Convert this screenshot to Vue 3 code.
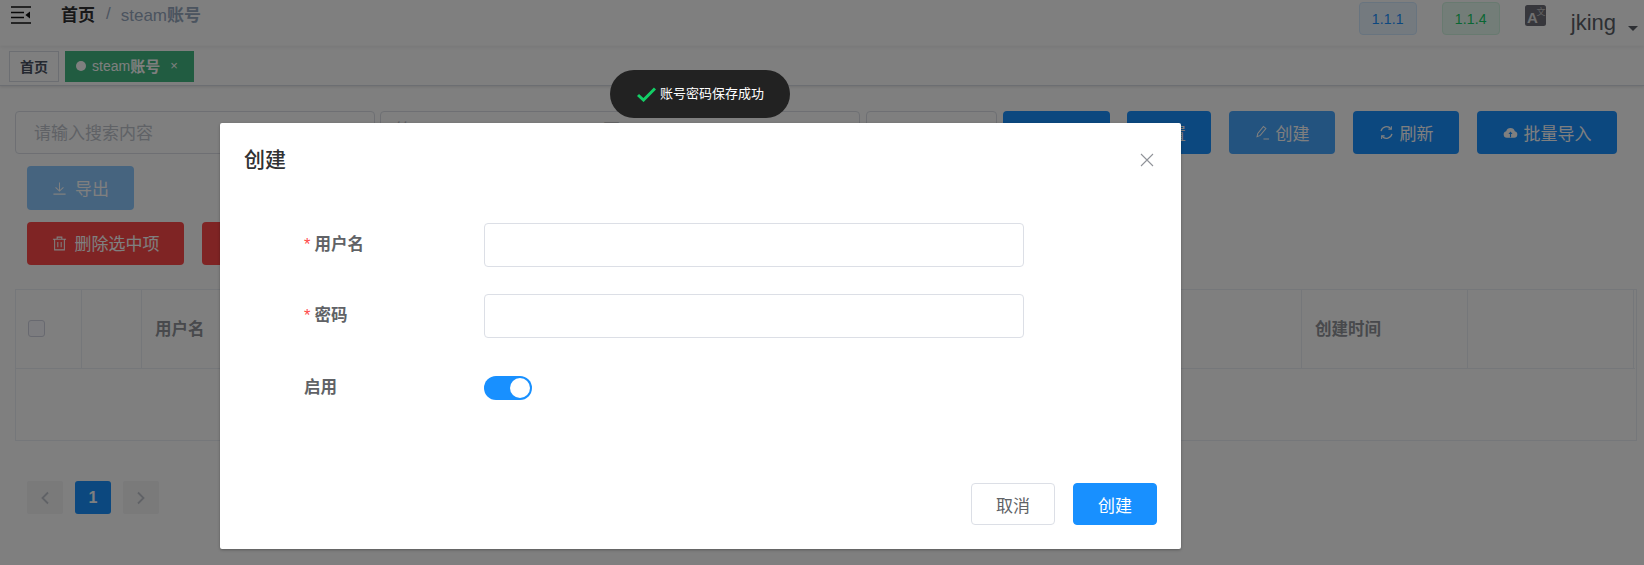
<script setup>
const filterSelects = [
  { cls: 'sel-a', text: '筛', dark: '不' },
  { cls: 'sel-b', text: '', dark: '' }
]
const columns = [
  { cls: 'col-check' },
  { cls: 'col-index' },
  { cls: 'col-name', label: '用户名' },
  { cls: 'col-time', label: '创建时间' },
  { cls: 'col-op' }
]
</script>

<template>
  <div class="page">
    <header class="navbar">
      <svg class="hamburger" width="20" height="18" viewBox="0 0 20 18">
        <path d="M0 1h20M0 6.5h13M0 11.5h13M0 17h20" stroke="#111" stroke-width="1.6" fill="none" />
        <path d="M19 5.5v7l-4.6-3.5z" fill="#111" />
      </svg>
      <nav class="crumbs">
        <span class="crumb-home">首页</span>
        <span class="crumb-sep">/</span>
        <span class="crumb-cur">steam<b>账号</b></span>
      </nav>
      <div class="nav-right">
        <span class="ver ver-blue">1.1.1</span>
        <span class="ver ver-green">1.1.4</span>
        <svg class="lang" width="21" height="21" viewBox="0 0 21 21">
          <rect width="21" height="21" rx="2.5" fill="#6e6e78" />
          <text x="2" y="17.5" font-family="Liberation Sans, sans-serif" font-size="15" font-weight="700" fill="#e0e0e0">A</text>
          <text x="11.5" y="9.5" font-family="Noto Sans CJK SC, sans-serif" font-size="9" fill="#c4c4c4">文</text>
        </svg>
        <span class="user">jking</span>
        <span class="caret"></span>
      </div>
    </header>

    <div class="tags">
      <span class="tag tag-home">首页</span>
      <span class="tag tag-active"><i class="dot"></i>steam<b>账号</b><span class="tag-x">×</span></span>
    </div>

    <main class="content">
      <div class="row">
        <div class="field search">请输入搜索内容</div>
        <div v-for="s in filterSelects" :key="s.cls" class="field" :class="s.cls">
          <span class="sel-text">{{ s.text }}</span>
          <span class="sel-dark">{{ s.dark }}</span>
        </div>
        <button class="btn btn-search">搜索</button>
        <button class="btn btn-reset">重置</button>
        <button class="btn btn-create">
          <svg class="ico" viewBox="0 0 16 16" fill="none" stroke="currentColor" stroke-width="1.1">
            <path d="M2.2 12.4 3 9 9 1.6l2.6 2.1-6 7.4z M9 15h6" />
          </svg>
          创建
        </button>
        <button class="btn btn-refresh">
          <svg class="ico" viewBox="0 0 16 16" fill="none" stroke="currentColor" stroke-width="1.4">
            <path d="M2.2 6.5A6 6 0 0 1 12.6 3.8M13.8 9.5A6 6 0 0 1 3.4 12.2" />
            <path d="M13.2 1.2v3.2H10M2.8 14.8v-3.2H6" stroke-width="1.1" />
          </svg>
          刷新
        </button>
        <button class="btn btn-import">
          <svg class="ico" viewBox="0 0 16 16">
            <path fill="currentColor" d="M4 13.5A3.5 3.5 0 0 1 3.4 6.6 4.8 4.8 0 0 1 12.6 6.6 3.5 3.5 0 0 1 12 13.5z" />
            <path fill="#1890ff" d="M8 7 5.8 9.6h1.6V13h1.2V9.6h1.6z" />
          </svg>
          批量导入
        </button>
      </div>

      <div class="row row-2">
        <button class="btn btn-export">
          <svg class="ico" viewBox="0 0 16 16" fill="none" stroke="currentColor" stroke-width="1.1">
            <path d="M8 1.5v9M3.8 6.8 8 10.8l4.2-4M1.5 14h13" />
          </svg>
          <span class="btn-text">导出</span>
        </button>
      </div>

      <div class="row row-3">
        <button class="btn btn-danger">
          <svg class="ico" viewBox="0 0 16 16" fill="none" stroke="currentColor" stroke-width="1.1">
            <path d="M1 3.5h14M5.5 3.5V1.2h5v2.3M2.8 3.5v11.3h10.4V3.5M6.2 6.5v5.5M9.8 6.5v5.5" />
          </svg>
          <span class="btn-text">删除选中项</span>
        </button>
        <button class="btn btn-danger">清空</button>
      </div>

      <div class="table">
        <div class="thead">
          <div v-for="c in columns" :key="c.cls" class="th" :class="c.cls">
            <span v-if="c.cls === 'col-check'" class="check"></span>
            <template v-else>{{ c.label }}</template>
          </div>
        </div>
        <div class="tbody"></div>
      </div>

      <div class="pager">
        <span class="pg">
          <svg width="10" height="14" viewBox="0 0 10 14" fill="none" stroke="currentColor" stroke-width="1.8"><path d="M8 1.5 2.5 7 8 12.5" /></svg>
        </span>
        <span class="pg pg-on">1</span>
        <span class="pg">
          <svg width="10" height="14" viewBox="0 0 10 14" fill="none" stroke="currentColor" stroke-width="1.8"><path d="M2 1.5 7.5 7 2 12.5" /></svg>
        </span>
      </div>
    </main>

    <div class="overlay"></div>

    <section class="dialog">
      <div class="dialog-head">
        <span class="dialog-title">创建</span>
        <svg class="close" width="14" height="14" viewBox="0 0 14 14" stroke="#909399" stroke-width="1.1" fill="none">
          <path d="M1 1l12 12M13 1 1 13" />
        </svg>
      </div>
      <form class="form" @submit.prevent>
        <div class="form-item">
          <label class="label"><em>*</em>用户名</label>
          <div class="input"></div>
        </div>
        <div class="form-item">
          <label class="label"><em>*</em>密码</label>
          <div class="input"></div>
        </div>
        <div class="form-item form-switch">
          <label class="label">启用</label>
          <span class="switch"><i></i></span>
        </div>
      </form>
      <div class="dialog-foot">
        <button class="dbtn">取消</button>
        <button class="dbtn dbtn-primary">创建</button>
      </div>
    </section>

    <div class="toast">
      <svg width="19" height="15" viewBox="0 0 19 15" fill="none" stroke="#13ce66" stroke-width="3">
        <path d="M1 8 6.5 13 18 1.5" />
      </svg>
      <span class="toast-text">账号密码保存成功</span>
    </div>
  </div>
</template>

<style scoped>
.page {
  position: relative;
  width: 1644px;
  height: 565px;
  overflow: hidden;
  background: #fff;
  font-family: "Liberation Sans", "Noto Sans CJK SC", sans-serif;
  font-size: 17px;
  color: #303133;
}

.navbar {
  display: flex;
  align-items: flex-start;
  height: 46px;
  box-sizing: border-box;
  box-shadow: 0 1px 4px rgba(0, 21, 41, 0.08);
}
.hamburger {
  margin: 6px 0 0 11px;
}
.crumbs {
  display: flex;
  align-items: center;
  height: 27px;
  margin-left: 30px;
}
.crumb-home {
  font-weight: 700;
  color: #303133;
}
.crumb-sep {
  margin: 0 10px 0 11px;
  color: #97a8be;
  font-weight: 400;
}
.crumb-cur {
  color: #97a8be;
}
.crumb-cur b,
.tag b {
  font-weight: 700;
}
.tag b {
  font-size: 15px;
}
.nav-right {
  display: flex;
  align-items: flex-start;
  margin-left: auto;
  padding-top: 2px;
}
.ver {
  display: flex;
  align-items: center;
  justify-content: center;
  width: 58px;
  height: 33px;
  box-sizing: border-box;
  border-radius: 4px;
  font-size: 14px;
  letter-spacing: 0.2px;
}
.ver-blue {
  background: #e8f4ff;
  border: 1px solid #d1e9ff;
  color: #1890ff;
}
.ver-green {
  margin-left: 25px;
  background: #e7faf0;
  border: 1px solid #d0f5e0;
  color: #13ce66;
}
.lang {
  margin: 3px 0 0 25px;
}
.user {
  margin: 3px 0 0 25px;
  font-size: 22px;
  line-height: 36px;
  color: #5a5e66;
}
.caret {
  width: 0;
  height: 0;
  margin: 24px 6px 0 12px;
  border-left: 5px solid transparent;
  border-right: 5px solid transparent;
  border-top: 5px solid #5a5e66;
}

.tags {
  display: flex;
  align-items: flex-start;
  gap: 6px;
  height: 40px;
  box-sizing: border-box;
  padding: 5px 0 0 9px;
  border-bottom: 1px solid #d8dce5;
  box-shadow: 0 1px 3px rgba(0, 0, 0, 0.12);
}
.tag {
  display: flex;
  align-items: center;
  height: 31px;
  box-sizing: border-box;
  padding-bottom: 2px;
  border: 1px solid #d8dce5;
  font-size: 14px;
  font-weight: 700;
  color: #495060;
}
.tag-home {
  justify-content: center;
  width: 50px;
}
.tag-active {
  width: 129px;
  font-weight: 400;
  background: #42b983;
  border-color: #42b983;
  color: #fff;
  padding-left: 10px;
}
.dot {
  width: 10px;
  height: 10px;
  margin-right: 6px;
  border-radius: 50%;
  background: #fff;
}
.tag-x {
  margin-left: 10px;
  font-size: 13px;
}

.content {
  padding: 25px 0 0 15px;
}
.row {
  display: flex;
  align-items: flex-start;
}
.row-2 {
  margin: 12px 0 0 12px;
}
.row-3 {
  gap: 18px;
  margin: 12px 0 0 12px;
}
.field {
  position: relative;
  height: 43px;
  box-sizing: border-box;
  border: 1px solid #dcdfe6;
  border-radius: 4px;
  background: #fff;
}
.search {
  width: 360px;
  padding: 1px 0 0 18px;
  line-height: 41px;
  color: #c0c4cc;
}
.sel-a {
  width: 480px;
  margin-left: 5px;
  padding: 9px 0 0 14px;
  line-height: 20px;
}
.sel-b {
  width: 131px;
  margin-left: 6px;
}
.sel-text {
  color: #c0c4cc;
}
.sel-dark {
  margin-left: 191px;
  color: #303133;
}
.btn {
  display: inline-flex;
  align-items: center;
  justify-content: center;
  gap: 6px;
  height: 43px;
  padding: 0;
  border: none;
  border-radius: 4px;
  background: #1890ff;
  color: #fff;
  font: inherit;
}
.ico {
  width: 15px;
  height: 15px;
  flex: none;
}
.btn-text {
  position: relative;
  top: -1px;
  margin-left: 2px;
}
.btn-search {
  width: 107px;
  margin-left: 6px;
}
.btn-reset {
  width: 84px;
  margin-left: 17px;
}
.btn-create {
  width: 106px;
  margin-left: 18px;
  background: #46a6ff;
}
.btn-refresh {
  width: 106px;
  margin-left: 18px;
}
.btn-import {
  width: 140px;
  margin-left: 18px;
}
.btn-export {
  width: 107px;
  height: 44px;
  background: #8cc8ff;
}
.btn-danger {
  width: 157px;
  background: #ff4949;
}

.table {
  width: 1622px;
  height: 152px;
  box-sizing: border-box;
  margin-top: 24px;
  border: 1px solid #ebeef5;
}
.thead {
  display: flex;
  width: 1619px;
  height: 79px;
  border-bottom: 1px solid #ebeef5;
  box-sizing: border-box;
}
.th {
  display: flex;
  align-items: center;
  box-sizing: border-box;
  border-right: 1px solid #ebeef5;
  padding: 0 0 2px 13px;
  font-size: 16.5px;
  font-weight: 700;
  color: #909399;
}
.col-check {
  width: 66px;
  padding-left: 12px;
}
.col-index {
  width: 60px;
}
.col-name {
  width: 1160px;
}
.col-time,
.col-op {
  width: 166px;
}
.check {
  width: 17px;
  height: 17px;
  box-sizing: border-box;
  border: 1px solid #d0d3e0;
  border-radius: 3px;
  background: #f8f9ff;
}

.pager {
  display: flex;
  gap: 12px;
  margin: 40px 0 0 12px;
}
.pg {
  display: flex;
  align-items: center;
  justify-content: center;
  width: 36px;
  height: 33px;
  border-radius: 2px;
  background: #f4f4f5;
  color: #c0c4cc;
  font-size: 16px;
  font-weight: 700;
}
.pg-on {
  background: #1890ff;
  color: #fff;
  border-radius: 3px;
}

.overlay {
  position: absolute;
  inset: 0;
  background: rgba(0, 0, 0, 0.5);
}

.dialog {
  position: absolute;
  left: 220px;
  top: 123px;
  display: flex;
  flex-direction: column;
  width: 961px;
  height: 426px;
  box-sizing: border-box;
  border-radius: 2px;
  background: #fff;
  box-shadow: 0 1px 3px rgba(0, 0, 0, 0.3);
}
.dialog-head {
  display: flex;
  align-items: center;
  justify-content: space-between;
  padding: 21px 27px 0 24px;
}
.dialog-title {
  font-size: 21px;
  font-weight: 500;
  line-height: 32px;
  color: #303133;
}
.form {
  padding: 47px 0 0 84px;
}
.form-item {
  display: flex;
  align-items: center;
  height: 44px;
  margin-bottom: 27px;
}
.form-item:nth-child(2) {
  margin-bottom: 38px;
}
.form-switch {
  height: 24px;
  margin-bottom: 0;
}
.label {
  width: 180px;
  padding-bottom: 4px;
  font-size: 16.5px;
  font-weight: 700;
  color: #606266;
}
.label em {
  margin-right: 4px;
  color: #ff4949;
  font-style: normal;
  font-weight: 400;
}
.input {
  width: 540px;
  height: 44px;
  box-sizing: border-box;
  border: 1px solid #dcdfe6;
  border-radius: 4px;
}
.switch {
  display: flex;
  justify-content: flex-end;
  align-items: center;
  width: 48px;
  height: 24px;
  box-sizing: border-box;
  padding-right: 2px;
  border-radius: 12px;
  background: #1890ff;
}
.switch i {
  width: 20px;
  height: 20px;
  border-radius: 50%;
  background: #fff;
}
.dialog-foot {
  display: flex;
  justify-content: flex-end;
  gap: 18px;
  margin-top: auto;
  padding: 0 24px 24px 0;
}
.dbtn {
  width: 84px;
  height: 42px;
  padding: 0;
  box-sizing: border-box;
  border: 1px solid #dcdfe6;
  border-radius: 4px;
  background: #fff;
  color: #606266;
  font: inherit;
}
.dbtn-primary {
  border-color: #1890ff;
  background: #1890ff;
  color: #fff;
}

.toast {
  position: absolute;
  left: 610px;
  top: 70px;
  display: flex;
  align-items: center;
  gap: 4px;
  width: 180px;
  height: 48px;
  box-sizing: border-box;
  padding-left: 27px;
  border-radius: 24px;
  background: #222;
  color: #fff;
  font-size: 13px;
}
.toast-text {
  padding-bottom: 4px;
}
</style>

<style>
html,
body {
  margin: 0;
  overflow: hidden;
}
</style>
